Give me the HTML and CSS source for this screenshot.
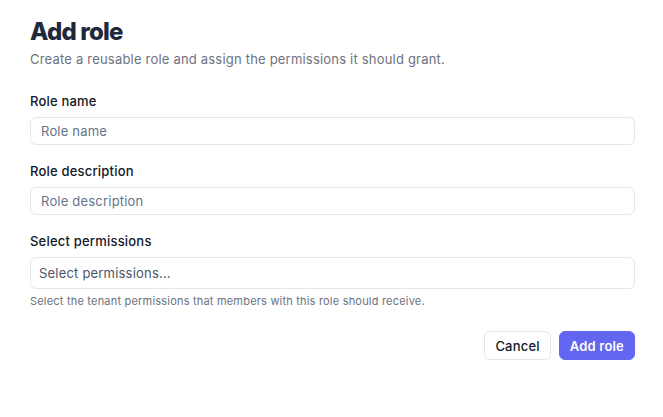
FILE: index.html
```html
<!DOCTYPE html>
<html lang="en">
<head>
<meta charset="utf-8">
<title>Add role</title>
<link rel="stylesheet" href="styles.css">
</head>
<body>
<main class="dialog">
  <header class="dialog-header">
    <h1 class="dialog-title">Add role</h1>
    <p class="dialog-subtitle">Create a reusable role and assign the permissions it should grant.</p>
  </header>
  <form class="role-form">
    <div class="field">
      <label class="field-label" for="role-name">Role name</label>
      <input class="text-input" id="role-name" type="text" placeholder="Role name">
    </div>
    <div class="field">
      <label class="field-label" for="role-desc">Role description</label>
      <input class="text-input" id="role-desc" type="text" placeholder="Role description">
    </div>
    <div class="field">
      <label class="field-label" for="role-perms">Select permissions</label>
      <div class="select-box" id="role-perms" tabindex="0">Select permissions...</div>
      <p class="field-help">Select the tenant permissions that members with this role should receive.</p>
    </div>
    <div class="actions">
      <button type="button" class="btn btn-secondary">Cancel</button>
      <button type="button" class="btn btn-primary">Add role</button>
    </div>
  </form>
</main>
</body>
</html>
```

FILE: styles.css
```css
* {
  box-sizing: border-box;
}

html, body {
  margin: 0;
  padding: 0;
  background: #ffffff;
}

body {
  font-family: Inter, "Open Sans", "Liberation Sans", sans-serif;
  color: #111827;
  letter-spacing: 0.2px;
}

.dialog {
  padding: 16px 28px 0 30px;
}

.dialog-header {
  display: flex;
  flex-direction: column;
  gap: 1px;
}

.dialog-title {
  margin: 0;
  font-size: 24px;
  line-height: 32px;
  font-weight: 800;
  color: #1e293b;
  letter-spacing: -0.8px;
}

.dialog-subtitle {
  margin: 0;
  font-size: 13px;
  line-height: 20px;
  color: #6b7280;
}

.role-form {
  margin-top: 22px;
  display: flex;
  flex-direction: column;
  gap: 16px;
}

.field {
  display: flex;
  flex-direction: column;
}

.field-label {
  font-size: 13px;
  line-height: 20px;
  font-weight: 500;
  color: #111827;
  margin-bottom: 6px;
}

.text-input {
  height: 28px;
  width: 100%;
  border: 1px solid #e2e6ee;
  border-radius: 6px;
  padding: 0 10px;
  font-family: inherit;
  font-size: 13px;
  letter-spacing: 0.2px;
  color: #111827;
  background: #ffffff;
  outline: none;
}

.text-input::placeholder {
  color: #64748b;
}

.select-box {
  height: 32px;
  border: 1px solid #e2e6ee;
  border-radius: 6px;
  padding: 0 8px;
  display: flex;
  align-items: center;
  font-size: 13px;
  color: #4b5563;
  outline: none;
}

.field-help {
  margin: 4px 0 0;
  font-size: 11px;
  line-height: 16px;
  color: #6b7280;
}

.actions {
  margin-top: 6px;
  display: flex;
  justify-content: flex-end;
  gap: 8px;
}

.btn {
  height: 29px;
  border-radius: 6px;
  font-family: inherit;
  font-size: 13px;
  font-weight: 500;
  letter-spacing: 0.2px;
  padding: 0 10px;
  cursor: pointer;
}

.btn-secondary {
  background: #ffffff;
  border: 1px solid #e2e6ee;
  color: #111827;
}

.btn-primary {
  background: #6366f1;
  border: 1px solid #6366f1;
  color: #ffffff;
  font-weight: 600;
}
```
